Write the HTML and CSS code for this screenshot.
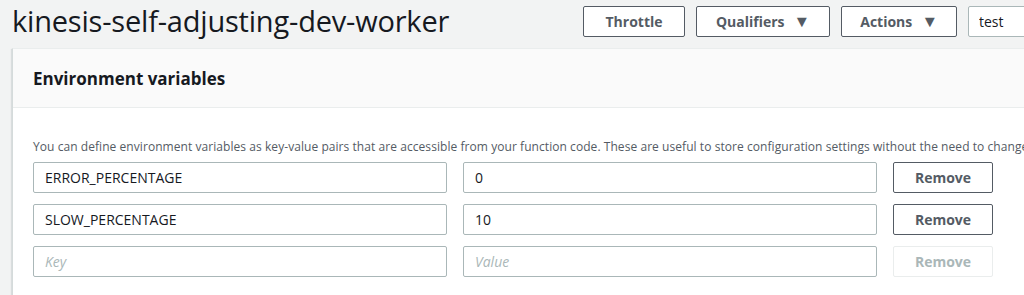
FILE: index.html
```html
<!DOCTYPE html>
<html lang="en">
<head>
    <meta charset="UTF-8">
    <meta name="viewport" content="width=device-width, initial-scale=1.0">
    <title>kinesis-self-adjusting-dev-worker</title>
    <link rel="stylesheet" href="styles.css">
</head>
<body>
    <div class="page">
        <div class="top-bar">
            <h1 class="fn-name">kinesis-self-adjusting-dev-worker</h1>
            <div class="top-actions">
                <button class="btn btn-throttle">Throttle</button>
                <button class="btn btn-qualifiers">Qualifiers <span class="caret">&#9660;</span></button>
                <button class="btn btn-actions">Actions <span class="caret">&#9660;</span></button>
                <input class="test-select" type="text" value="test">
            </div>
        </div>

        <div class="panel">
            <div class="panel-header">
                <h2>Environment variables</h2>
            </div>
            <div class="panel-body">
                <p class="help">You can define environment variables as key-value pairs that are accessible from your function code. These are useful to store configuration settings without the need to change function code.</p>

                <div class="env-row">
                    <input class="field" type="text" value="ERROR_PERCENTAGE">
                    <input class="field" type="text" value="0">
                    <button class="btn btn-remove">Remove</button>
                </div>
                <div class="env-row">
                    <input class="field" type="text" value="SLOW_PERCENTAGE">
                    <input class="field" type="text" value="10">
                    <button class="btn btn-remove">Remove</button>
                </div>
                <div class="env-row">
                    <input class="field" type="text" placeholder="Key">
                    <input class="field" type="text" placeholder="Value">
                    <button class="btn btn-remove" disabled>Remove</button>
                </div>
            </div>
        </div>
    </div>
</body>
</html>
```

FILE: styles.css
```css
/* General Styles */
body {
    margin: 0;
    padding: 0;
    background-color: #f2f3f3;
    font-family: 'Open Sans', 'Noto Sans', sans-serif;
    color: #16191f;
    overflow: hidden;
}

.page {
    width: 1100px;
    padding: 0 12px;
    box-sizing: border-box;
}

/* Top bar */
.top-bar {
    display: flex;
    align-items: flex-start;
    justify-content: space-between;
    height: 48px;
}

.fn-name {
    margin: 0;
    padding-top: 1px;
    font-size: 29px;
    font-weight: 400;
    line-height: 40px;
    letter-spacing: -0.2px;
    color: #16191f;
}

.top-actions {
    display: flex;
    gap: 11px;
    padding-top: 6px;
}

.btn {
    height: 31px;
    padding: 0;
    background: #fff;
    border: 1px solid #545b64;
    border-radius: 2px;
    font-family: inherit;
    font-size: 14px;
    font-weight: 700;
    color: #545b64;
    white-space: nowrap;
    cursor: pointer;
    box-sizing: border-box;
}

.btn-throttle {
    width: 102px;
}

.btn-qualifiers {
    width: 134px;
}

.btn-actions {
    width: 116px;
}

.caret {
    display: inline-block;
    font-size: 16px;
    line-height: 1;
    margin-left: 6px;
    transform: scaleX(1.05);
}

.test-select {
    width: 120px;
    height: 31px;
    padding: 0 10px;
    border: 1px solid #aab7b8;
    border-radius: 2px;
    font-family: inherit;
    font-size: 14px;
    color: #16191f;
    box-sizing: border-box;
}

/* Panel */
.panel {
    background: #fff;
    border: 1px solid #eaeded;
    border-left-color: #d5dbdb;
    box-shadow: -1px 1px 1px 0 rgba(0, 28, 36, 0.1);
}

.panel-header {
    background: #fafafa;
    border-bottom: 1px solid #eaeded;
    height: 59px;
    padding: 1px 20px 0;
    box-sizing: border-box;
    display: flex;
    align-items: center;
}

.panel-header h2 {
    margin: 0;
    font-size: 17px;
    font-weight: 700;
    color: #16191f;
}

.panel-body {
    padding: 30px 20px 20px;
}

.help {
    margin: 0 0 6px;
    font-size: 12px;
    line-height: 18px;
    letter-spacing: 0.06px;
    color: #545b64;
    white-space: nowrap;
}

.env-row {
    display: flex;
    gap: 16px;
    margin-bottom: 11px;
}

.field {
    width: 414px;
    height: 31px;
    padding: 0 11px;
    border: 1px solid #aab7b8;
    border-radius: 2px;
    font-family: inherit;
    font-size: 14px;
    color: #16191f;
    box-sizing: border-box;
}

.field::placeholder {
    font-style: italic;
    color: #aab7b8;
}

.btn-remove {
    width: 100px;
}

.btn-remove:disabled {
    border-color: #eaeded;
    color: #aab7b8;
    cursor: default;
}
```
